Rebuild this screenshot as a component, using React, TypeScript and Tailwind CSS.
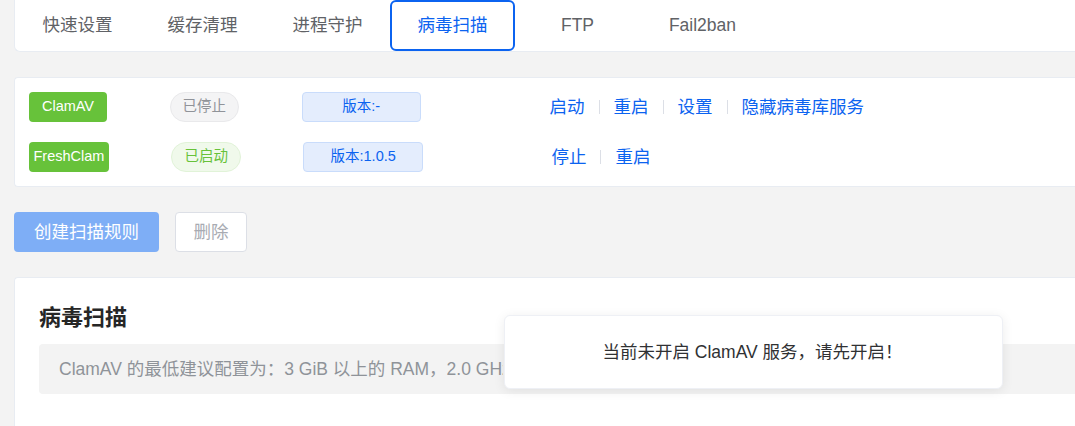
import React from "react";

const BLUE = "text-[#0b63f0]";

function Tag({ name }: { name: string }) {
  return (
    <div className="min-w-[78px] h-[30px] px-[4.5px] rounded-[4px] bg-[#67c23a] text-white text-[14.5px] flex items-center justify-center">
      {name}
    </div>
  );
}

function Sep() {
  return <div className="w-px h-[14px] bg-[#dcdfe6] mx-[14px]" />;
}

export default function App() {
  const tabs = ["快速设置", "缓存清理", "进程守护", "病毒扫描", "FTP", "Fail2ban"];
  return (
    <div
      className="relative w-full h-[426px] overflow-hidden bg-[#f3f3f3]"
      style={{ fontFamily: '"Liberation Sans", "Noto Sans CJK SC", sans-serif' }}
    >
      <div className="w-[1160px] pl-[14px]">
        {/* Tabs card */}
        <div className="h-[52px] bg-white rounded-bl-[6px] border-l border-b border-[#e8ecf2] flex">
          {tabs.map((t, i) =>
            i === 3 ? (
              <div
                key={t}
                className="w-[125px] h-full border-2 border-[#0b63f0] rounded-[6px] flex items-center justify-center text-[17.5px] text-[#0b63f0]"
              >
                {t}
              </div>
            ) : (
              <div
                key={t}
                className="w-[125px] h-full flex items-center justify-center text-[17.5px] text-[#606266]"
              >
                {t}
              </div>
            )
          )}
        </div>

        {/* Services card */}
        <div className="mt-[25px] bg-white rounded-l-[4px] border border-r-0 border-[#e8ecf2] pl-[14px] pt-[14px] pb-[14px] flex flex-col gap-[20px]">
          <div className="flex items-center h-[30px]">
            <Tag name="ClamAV" />
            <div className="ml-[62.5px] h-[30px] px-[12px] rounded-full bg-[#f4f4f5] border border-[#e9e9eb] text-[#909399] text-[14.5px] flex items-center">
              已停止
            </div>
            <div className="ml-[62.5px] w-[119.5px] h-[30px] rounded-[4px] bg-[#e4edfd] border border-[#c9dcfb] text-[#0b63f0] text-[14.5px] flex items-center justify-center">
              版本:-
            </div>
            <div className={`ml-[128.5px] flex items-center text-[17.5px] ${BLUE}`}>
              <span>启动</span>
              <Sep />
              <span>重启</span>
              <Sep />
              <span>设置</span>
              <Sep />
              <span>隐藏病毒库服务</span>
            </div>
          </div>
          <div className="flex items-center h-[30px]">
            <Tag name="FreshClam" />
            <div className="ml-[62.5px] h-[30px] px-[12px] rounded-full bg-[#f0f9eb] border border-[#e1f3d8] text-[#67c23a] text-[14.5px] flex items-center">
              已启动
            </div>
            <div className="ml-[62.5px] w-[119.5px] h-[30px] rounded-[4px] bg-[#e4edfd] border border-[#c9dcfb] text-[#0b63f0] text-[14.5px] flex items-center justify-center">
              版本:1.0.5
            </div>
            <div className={`ml-[128.5px] flex items-center text-[17.5px] ${BLUE}`}>
              <span>停止</span>
              <Sep />
              <span>重启</span>
            </div>
          </div>
        </div>

        {/* Buttons */}
        <div className="mt-[25px] flex items-center gap-[16px]">
          <div className="w-[145px] h-[40px] rounded-[4px] bg-[#7eaef6] text-white text-[17.5px] flex items-center justify-center">
            创建扫描规则
          </div>
          <div className="w-[72px] h-[40px] rounded-[4px] bg-white border border-[#dcdfe6] text-[#a8abb2] text-[17.5px] flex items-center justify-center">
            删除
          </div>
        </div>

        {/* Scan card */}
        <div className="mt-[25px] h-[200px] bg-white rounded-l-[4px] border border-r-0 border-[#e8ecf2] pl-[24px] pt-[25px]">
          <div className="h-[30px] leading-[30px] text-[22px] font-bold text-[#262626]">病毒扫描</div>
          <div className="mt-[11px] h-[50px] rounded-[4px] bg-[#f3f3f3] pl-[20px] flex items-center text-[17.5px] text-[#8f9399] whitespace-nowrap">
            <span className="block w-[444px] overflow-hidden">
              ClamAV 的最低建议配置为：3 GiB 以上的 RAM，2.0 GHz 以上的 CPU，以及至少 5 GiB 的磁盘空间。
            </span>
          </div>
        </div>
      </div>

      {/* Toast */}
      <div className="absolute left-[504px] top-[315px] w-[499px] h-[74px] bg-white rounded-[6px] border border-[#eef0f5] shadow-[0_2px_12px_rgba(0,0,0,0.08)] flex items-center justify-center pr-[2px] text-[17.5px] text-[#303133]">
        当前未开启 ClamAV 服务，请先开启！
      </div>
    </div>
  );
}
